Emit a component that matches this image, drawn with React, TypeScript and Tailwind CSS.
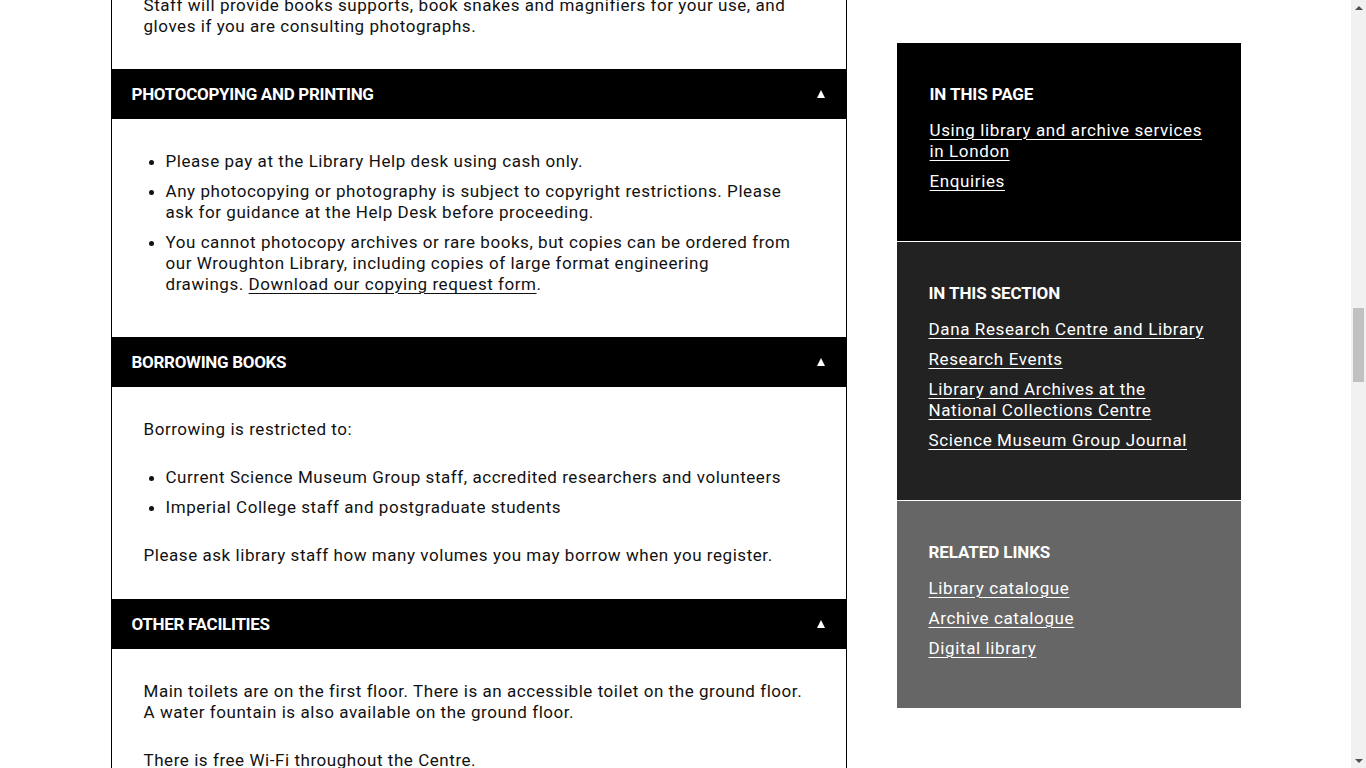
import React from "react";

const body = "font-['Roboto',_'Liberation_Sans',_sans-serif]";

function Header({ title }: { title: string }) {
  return (
    <div className="flex h-[50px] items-center justify-between bg-black pl-[20px] pr-[21px]">
      <h2 className="text-[17px] font-bold uppercase leading-[20px] tracking-[-0.3px] text-white">{title}</h2>
      <svg width="8" height="8" viewBox="0 0 8 8" aria-hidden="true">
        <polygon points="4,0 8,8 0,8" fill="#fff" />
      </svg>
    </div>
  );
}

function SideBox({ title, links, bg, extra }: { title: string; links: string[]; bg: string; extra: string }) {
  return (
    <div className={`${bg} ${extra} pr-[33px] pt-[41px] pb-[49px]`}>
      <h3 className="text-[17px] font-bold uppercase leading-[20px] tracking-[-0.1px] text-white">{title}</h3>
      <ul className="mt-[16px] flex flex-col gap-[9px]">
        {links.map((l) => (
          <li key={l} className="text-[17px] leading-[21px] tracking-[0.62px] text-white">
            <a href="#" className="underline underline-offset-[3px] decoration-1">{l}</a>
          </li>
        ))}
      </ul>
    </div>
  );
}

export default function App() {
  return (
    <div className={`flex h-[768px] w-[1366px] overflow-hidden bg-white text-[#111] ${body}`}>
      <div className="flex-1 overflow-hidden">
        <div className="mx-auto flex w-[1130px] items-start gap-[50px]">
          {/* main column */}
          <div className="-mt-[5px] w-[736px] border-x border-black tracking-[0.55px]">
            <div className="px-[32px] pb-[32px] text-[17px] leading-[21px]">
              <p>
                Staff will provide books supports, book snakes and magnifiers for your use, and gloves if you are
                consulting photographs.
              </p>
            </div>

            <Header title="Photocopying and printing" />
            <div className="px-[32px] pt-[32px] pb-[42px] text-[17px] leading-[21px]">
              <ul className="flex list-disc flex-col gap-[9px] pl-[22px]">
                <li>Please pay at the Library Help desk using cash only.</li>
                <li>
                  Any photocopying or photography is subject to copyright restrictions. Please ask for guidance at the
                  Help Desk before proceeding.
                </li>
                <li>
                  You cannot photocopy archives or rare books, but copies can be ordered from our Wroughton Library,
                  including copies of large format engineering drawings.{"\u00a0"}
                  <a href="#" className="underline underline-offset-[3px] decoration-1">
                    Download our copying request form
                  </a>
                  .
                </li>
              </ul>
            </div>

            <Header title="Borrowing books" />
            <div className="px-[32px] pt-[32px] pb-[33px] text-[17px] leading-[21px]">
              <p>Borrowing is restricted to:</p>
              <ul className="mt-[27px] flex list-disc flex-col gap-[9px] pl-[22px]">
                <li>Current Science Museum Group staff, accredited researchers and volunteers</li>
                <li>Imperial College staff and postgraduate students</li>
              </ul>
              <p className="mt-[27px]">Please ask library staff how many volumes you may borrow when you register.</p>
            </div>

            <Header title="Other facilities" />
            <div className="px-[32px] pt-[32px] pb-[34px] text-[17px] leading-[21px]">
              <p>
                Main toilets are on the first floor. There is an accessible toilet on the ground floor. A water fountain
                is also available on the ground floor.
              </p>
              <p className="mt-[27px]">There is free Wi-Fi throughout the Centre.</p>
            </div>
          </div>

          {/* sidebar */}
          <aside className="mt-[43px] flex w-[344px] flex-col gap-px bg-white">
            <SideBox
              title="In this page"
              bg="bg-black"
              extra="pl-[33px]"
              links={["Using library and archive services in London", "Enquiries"]}
            />
            <SideBox
              title="In this section"
              bg="bg-[#222222]"
              extra="pl-[32px]"
              links={[
                "Dana Research Centre and Library",
                "Research Events",
                "Library and Archives at the National Collections Centre",
                "Science Museum Group Journal",
              ]}
            />
            <SideBox
              title="Related links"
              bg="bg-[#666666]"
              extra="pl-[32px]"
              links={["Library catalogue", "Archive catalogue", "Digital library"]}
            />
          </aside>
        </div>
      </div>

      {/* scrollbar */}
      <div className="flex w-[15px] flex-col items-center bg-[#f1f1f1]">
        <div className="flex h-[15px] w-full items-center justify-center">
          <svg width="8" height="4" viewBox="0 0 8 4" aria-hidden="true">
            <polygon points="4,0 8,4 0,4" fill="#505050" />
          </svg>
        </div>
        <div className="h-[293px]" />
        <div className="h-[74px] w-[11px] bg-[#c1c1c1]" />
        <div className="flex-1" />
        <div className="flex h-[15px] w-full items-center justify-center">
          <svg width="8" height="4" viewBox="0 0 8 4" aria-hidden="true">
            <polygon points="0,0 8,0 4,4" fill="#505050" />
          </svg>
        </div>
      </div>
    </div>
  );
}
